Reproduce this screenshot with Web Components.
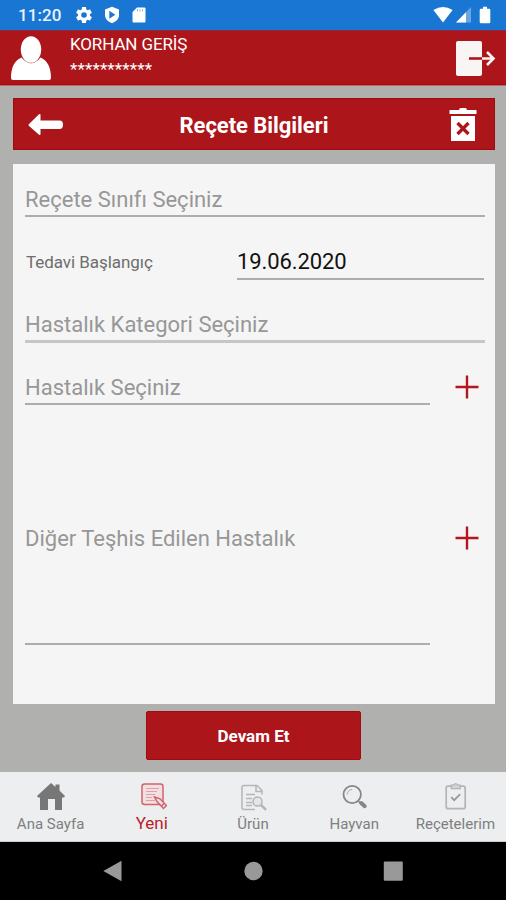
<!DOCTYPE html>
<html lang="tr">
<head>
<meta charset="utf-8">
<title>Reçete Bilgileri</title>
<style>
  html, body { margin: 0; height: 100%; }
  body {
    font-family: Roboto, "Noto Sans", sans-serif;
    background: #b0b1ae;
    --color-brand: #ac151a;
    --color-brand-edge: #a30a10;
    --color-hint: #979797;
    --color-line: #adadad;
    overflow: hidden;
  }
</style>
</head>
<body>
<recete-app>
  <status-bar slot="top" time="11:20"></status-bar>
  <user-header slot="top" name="KORHAN GERİŞ" number="***********"></user-header>

  <title-bar>Reçete Bilgileri</title-bar>
  <form-card>
    <form-field height="53">Reçete Sınıfı Seçiniz</form-field>
    <form-field height="63" label="Tedavi Başlangıç" filled>19.06.2020</form-field>
    <form-field height="63" thick>Hastalık Kategori Seçiniz</form-field>
    <form-field height="62" add>Hastalık Seçiniz</form-field>
    <form-field height="240" add multiline>Diğer Teşhis Edilen Hastalık</form-field>
  </form-card>
  <action-button>Devam Et</action-button>

  <tab-bar slot="bottom">
    <tab-item icon="home">Ana Sayfa</tab-item>
    <tab-item icon="edit" active>Yeni</tab-item>
    <tab-item icon="product">Ürün</tab-item>
    <tab-item icon="search">Hayvan</tab-item>
    <tab-item icon="clipboard">Reçetelerim</tab-item>
  </tab-bar>
  <system-nav slot="bottom"></system-nav>
</recete-app>

<script>
// page shell - slots: top, (default) content, bottom
class ReceteApp extends HTMLElement {
  constructor() {
    super();
    this.attachShadow({ mode: 'open' });
    this.shadowRoot.innerHTML = `
      <style>
        :host { display: flex; flex-direction: column; height: 900px; width: 506px; }
        main {
          flex: 1;
          display: flex;
          flex-direction: column;
          padding: 13px 11px 0 13px;
          border-top: 1px solid #c4686a;
          box-sizing: border-box;
        }
      </style>
      <slot name="top"></slot>
      <main><slot></slot></main>
      <slot name="bottom"></slot>
    `;
  }
}

// android status bar - attributes: time
class StatusBar extends HTMLElement {
  constructor() {
    super();
    this.attachShadow({ mode: 'open' });
    this.shadowRoot.innerHTML = `
      <style>
        :host {
          display: flex;
          align-items: center;
          height: 30px;
          padding: 0 15px 0 18px;
          box-sizing: border-box;
          background: #1976d2;
          color: #fff;
        }
        .time { font-size: 17px; font-weight: 500; line-height: 30px; width: 58px; letter-spacing: .1px; color: #eaf3fc; }
        .group { display: flex; align-items: center; }
        .left { gap: 12px; }
        .right { margin-left: auto; gap: 3px; }
        svg { display: block; fill: #fff; }
      </style>
      <span class="time"></span>
      <div class="group left">
        <svg width="16" height="16" viewBox="2 2 20 20"><path d="M19.43 12.98c.04-.32.07-.64.07-.98s-.03-.66-.07-.98l2.11-1.65c.19-.15.24-.42.12-.64l-2-3.46c-.12-.22-.39-.3-.61-.22l-2.49 1c-.52-.4-1.08-.73-1.69-.98l-.38-2.65A.49.49 0 0 0 14 2h-4c-.25 0-.46.18-.49.42l-.38 2.65c-.61.25-1.17.59-1.69.98l-2.49-1c-.23-.09-.49 0-.61.22l-2 3.46c-.13.22-.07.49.12.64l2.11 1.65c-.04.32-.07.65-.07.98s.03.66.07.98l-2.11 1.65c-.19.15-.24.42-.12.64l2 3.46c.12.22.39.3.61.22l2.49-1c.52.4 1.08.73 1.69.98l.38 2.65c.03.24.24.42.49.42h4c.25 0 .46-.18.49-.42l.38-2.65c.61-.25 1.17-.59 1.69-.98l2.49 1c.23.09.49 0 .61-.22l2-3.46c.12-.22.07-.49-.12-.64zM12 15.5a3.5 3.5 0 1 1 0-7 3.5 3.5 0 0 1 0 7z"/></svg>
        <svg width="16" height="18" viewBox="0 0 16 18"><path d="M8 .8l7 2.6v5.8c0 3.5-3 6.5-7 8-4-1.5-7-4.5-7-8V3.400z"/><path fill="#1976d2" d="M5.300 4.800v8l6-4z"/></svg>
        <svg width="14" height="16" viewBox="0 0 14 16"><path d="M5 .5h7.500q1 0 1 1v13q0 1-1 1h-11q-1 0-1-1V5z"/><path stroke="#8fbbea" stroke-width="1" d="M5.500 2v2.500M8 2v2.500M10.500 2v2.500"/></svg>
      </div>
      <div class="group right">
        <svg width="20" height="16" viewBox="0 0 20 16"><path d="M.4 3Q10-3 19.600 3L10 15.500z"/></svg>
        <svg width="15" height="16" viewBox="0 0 15 16"><path opacity=".35" d="M15 0v15.500H0z"/><path d="M10 5.200v10.300H0z"/></svg>
        <svg style="margin-left:5px" width="12" height="18" viewBox="0 0 12 18"><path d="M4 .7h4v2h2q1.300 0 1.300 1.300v12q0 1.300-1.300 1.300H2Q.7 17.300.7 16V4Q.7 2.700 2 2.700h2z"/></svg>
      </div>
    `;
  }

  connectedCallback() {
    this.shadowRoot.querySelector('.time').textContent = this.getAttribute('time');
  }
}

// signed-in user strip - attributes: name, number
class UserHeader extends HTMLElement {
  constructor() {
    super();
    this.attachShadow({ mode: 'open' });
    this.shadowRoot.innerHTML = `
      <style>
        :host {
          display: flex;
          height: 55px;
          padding: 0 10px 0 10px;
          box-sizing: border-box;
          background: var(--color-brand);
          border-top: 1px solid #93283e;
          border-bottom: 1px solid var(--color-brand-edge);
          color: #fff;
        }
        .user { margin-top: 4px; }
        .text { display: flex; flex-direction: column; margin-left: 18px; flex: 1; font-size: 17px; }
        .name { line-height: 24px; margin-top: 1px; letter-spacing: -.12px; }
        .number { line-height: 24px; margin-top: 1px; letter-spacing: .15px; }
        .exit { margin-top: 9px; }
        svg { display: block; }
      </style>
      <svg class="user" width="42" height="46" viewBox="0 0 42 46" fill="#fff">
        <path d="M1 43C1 32 5 25 11.500 22.500Q21 34 30.500 22.500C37 25 41 32 41 43Q41 45 39 45H3Q1 45 1 43z"/>
        <ellipse cx="21" cy="14.500" rx="10.200" ry="13.300"/>
      </svg>
      <div class="text"><span class="name"></span><span class="number"></span></div>
      <svg class="exit" width="41" height="37" viewBox="0 0 41 37" fill="none">
        <rect x="1" y="1" width="26" height="35" rx="2" fill="#f8f5f4"/>
        <path d="M14 18.500h13" stroke="#ac151a" stroke-width="2.600"/>
        <path d="M27 18.500h12M32 12l6.500 6.500L32 25" stroke="#f8f5f4" stroke-width="2.600"/>
      </svg>
    `;
  }

  connectedCallback() {
    this.shadowRoot.querySelector('.name').textContent = this.getAttribute('name');
    this.shadowRoot.querySelector('.number').textContent = this.getAttribute('number');
  }
}

// page title with back and delete buttons
class TitleBar extends HTMLElement {
  constructor() {
    super();
    this.attachShadow({ mode: 'open' });
    this.shadowRoot.innerHTML = `
      <style>
        :host {
          display: flex;
          align-items: center;
          justify-content: space-between;
          height: 52px;
          margin-top: -1px;
          padding: 0 17px 0 14px;
          box-sizing: border-box;
          background: var(--color-brand);
          border: 1px solid var(--color-brand-edge);
          color: #fff;
          font-size: 22px;
          font-weight: 700;
        }
        h1 { margin: 0; font: inherit; line-height: 26px; letter-spacing: -.05px; padding: 4px 5px 0 0; }
        svg { display: block; fill: #fff; }
      </style>
      <svg width="36" height="24" viewBox="0 0 36 24"><path transform="translate(0 1)" d="M.8 11.300L11 1.300Q12.500.3 12.500 2v5.500h19q3.500 0 3.500 4.200t-3.500 4.200h-19V21q0 1.700-1.500.7L.8 12.700q-.6-.7 0-1.400z"/></svg>
      <h1><slot></slot></h1>
      <svg width="28" height="35" viewBox="0 0 28 35">
        <path d="M.5 3H10Q10 1 12 1h4q2 0 2 2h9.500v4H.5zM2 9h24v25H2z"/>
        <path d="M8.500 16l11 11M19.500 16l-11 11" stroke="#ac151a" stroke-width="3.300"/>
      </svg>
    `;
  }
}

class FormCard extends HTMLElement {
  constructor() {
    super();
    this.attachShadow({ mode: 'open' });
    this.shadowRoot.innerHTML = `
      <style>
        :host {
          display: flex;
          flex-direction: column;
          height: 540px;
          margin-top: 14px;
          padding: 0 10px 0 12px;
          box-sizing: border-box;
          background: #f5f5f5;
        }
      </style>
      <slot></slot>
    `;
  }
}

/*
underlined material style field
 - attributes: height, label, filled, thick, add, multiline
*/
class FormField extends HTMLElement {
  constructor() {
    super();
    this.attachShadow({ mode: 'open' });
    this.shadowRoot.innerHTML = `
      <style>
        :host { display: flex; align-items: flex-end; flex-shrink: 0; color: var(--color-hint); }
        .label { width: 212px; font-size: 17px; line-height: 26px; letter-spacing: -.05px; color: #6d6d6d; padding: 0 0 5px 1px; box-sizing: border-box; }
        .value {
          flex: 1;
          font-size: 22px;
          line-height: 26px;
          padding-bottom: 2px;
          border-bottom: 2px solid var(--color-line);
        }
        :host([filled]) .value { color: #111; margin-right: 1px; padding-bottom: 3px; letter-spacing: -.1px; }
        :host([thick]) .value { border-bottom: 3px solid #c6c6c6; }
        :host([multiline]) .value { padding-bottom: 91px; }
        .add { width: 24px; height: 24px; margin: 0 6px 6px 26px; }
        :host([add]) .value { margin-right: -1px; flex: 0 0 405px; }
        :host([multiline]) .add { margin-bottom: 95px; }
        [hidden] { display: none; }
      </style>
      <span class="label" hidden></span>
      <div class="value"><slot></slot></div>
      <svg class="add" viewBox="0 0 24 24" hidden><path d="M12 .5v23M.5 12h23" stroke="#b3161d" stroke-width="2.400"/></svg>
    `;
  }

  connectedCallback() {
    const label = this.shadowRoot.querySelector('.label');
    this.style.height = `${this.getAttribute('height')}px`;
    if (this.hasAttribute('label')) {
      label.textContent = this.getAttribute('label');
      label.hidden = false;
    }
    if (this.hasAttribute('add'))
      this.shadowRoot.querySelector('.add').removeAttribute('hidden');
  }
}

class ActionButton extends HTMLElement {
  constructor() {
    super();
    this.attachShadow({ mode: 'open' });
    this.shadowRoot.innerHTML = `
      <style>
        :host { display: block; margin: 7px 0 0 133px; width: 215px; height: 49px; }
        button {
          display: block;
          width: 100%;
          height: 100%;
          padding: 1px 0 0;
          border: 1px solid var(--color-brand-edge);
          border-radius: 2px;
          background: var(--color-brand);
          color: #fff;
          font: 700 17px Roboto, sans-serif;
        }
      </style>
      <button><slot></slot></button>
    `;
  }
}

class TabBar extends HTMLElement {
  constructor() {
    super();
    this.attachShadow({ mode: 'open' });
    this.shadowRoot.innerHTML = `
      <style>
        :host {
          display: grid;
          grid-template-columns: repeat(5, 1fr);
          height: 70px;
          box-sizing: border-box;
          background: #eceeef;
          border-bottom: 1px solid #c9cbcc;
        }
      </style>
      <slot></slot>
    `;
  }
}

const TAB_ICONS = {
  home: `<path fill="#777" d="M1 15L15 2l4.500 4V3.500h4v6L29 15l-1 1.500h-2V29h-7V18h-7v11H4V16.500H2z"/>`,
  edit: `<g transform="translate(1 1)" fill="none" stroke="#d0646d" stroke-width="1.500"><rect x="4" y="2" width="21" height="20.500" rx="2.500" fill="#f2dfe2"/><path stroke="#dfa0a6" stroke-width="1" d="M8 6.500h13M8 9.500h11M8 12.500h9M8 15.500h6M8 18.500h9"/><path fill="#f2dfe2" d="M16.500 15l5.500 1.800 6.500 6.700-3 3-6.500-7z"/><path d="M23 24.500l3-3"/></g>`,
  product: `<g transform="translate(0 1.500)" fill="none" stroke="#b4b6b7" stroke-width="1.500"><path d="M24 12V8l-5-5H6q-2 0-2 2v20q0 2 2 2h11M18 3v6h6M8 12h9M8 16h6M8 20h6M8 23h6"/><circle cx="19.500" cy="19" r="4.500" fill="#e4e6e7"/><path stroke-width="2.500" d="M23 22.500l5 4.800"/></g>`,
  search: `<g transform="translate(.7 1.500)" fill="none" stroke="#858687"><circle cx="12.500" cy="12" r="8.700" stroke-width="1.800"/><path stroke="#aaa" d="M7.500 12a5 5 0 0 1 5-5"/><path stroke-width="1.500" d="M18.500 18.500l3 3"/><path stroke-width="4" stroke-linecap="round" d="M21.500 20.500l3.500 3.200"/></g>`,
  clipboard: `<g transform="translate(1.200 1.200)" fill="none" stroke="#b2b4b5" stroke-width="1.700"><rect x="5" y="4" width="19" height="22.500" rx="2"/><path fill="#d2d4d5" stroke-width="1.200" d="M10 3h2.500q2-3 4 0H19v3.500h-9z"/><path stroke="#98999a" d="M10 15l3 3 6-6"/></g>`
};

// bottom tab - attributes: icon, active
class TabItem extends HTMLElement {
  constructor() {
    super();
    this.attachShadow({ mode: 'open' });
    this.shadowRoot.innerHTML = `
      <style>
        :host {
          display: flex;
          flex-direction: column;
          align-items: center;
          padding-top: 9px;
          color: #7e7f80;
          font-size: 15px;
          white-space: nowrap;
        }
        :host([active]) { color: #b8222a; font-size: 17px; }
        svg { display: block; width: 30px; height: 30px; }
        .text { line-height: 20px; margin-top: 3px; }
        :host([active]) .text { margin-top: 2px; }
      </style>
      <svg viewBox="0 0 30 30"></svg>
      <span class="text"><slot></slot></span>
    `;
  }

  connectedCallback() {
    this.shadowRoot.querySelector('svg').innerHTML = TAB_ICONS[this.getAttribute('icon')];
  }
}

// android back / home / recents
class SystemNav extends HTMLElement {
  constructor() {
    super();
    this.attachShadow({ mode: 'open' });
    this.shadowRoot.innerHTML = `
      <style>
        :host { display: block; height: 58px; background: #000; }
        div { display: flex; justify-content: space-between; padding: 18px 103px 0; }
        svg { display: block; width: 20px; height: 22px; fill: #999; }
      </style>
      <div>
        <svg viewBox="0 0 20 22"><path d="M.3 11L18.500.8v20.500z"/></svg>
        <svg viewBox="0 0 20 22"><circle cx="10.500" cy="11" r="9.200"/></svg>
        <svg viewBox="0 0 20 22"><rect x=".8" y="1.500" width="19" height="19.200" rx="1"/></svg>
      </div>
    `;
  }
}

customElements.define('recete-app', ReceteApp);
customElements.define('status-bar', StatusBar);
customElements.define('user-header', UserHeader);
customElements.define('title-bar', TitleBar);
customElements.define('form-card', FormCard);
customElements.define('form-field', FormField);
customElements.define('action-button', ActionButton);
customElements.define('tab-bar', TabBar);
customElements.define('tab-item', TabItem);
customElements.define('system-nav', SystemNav);
</script>
</body>
</html>
